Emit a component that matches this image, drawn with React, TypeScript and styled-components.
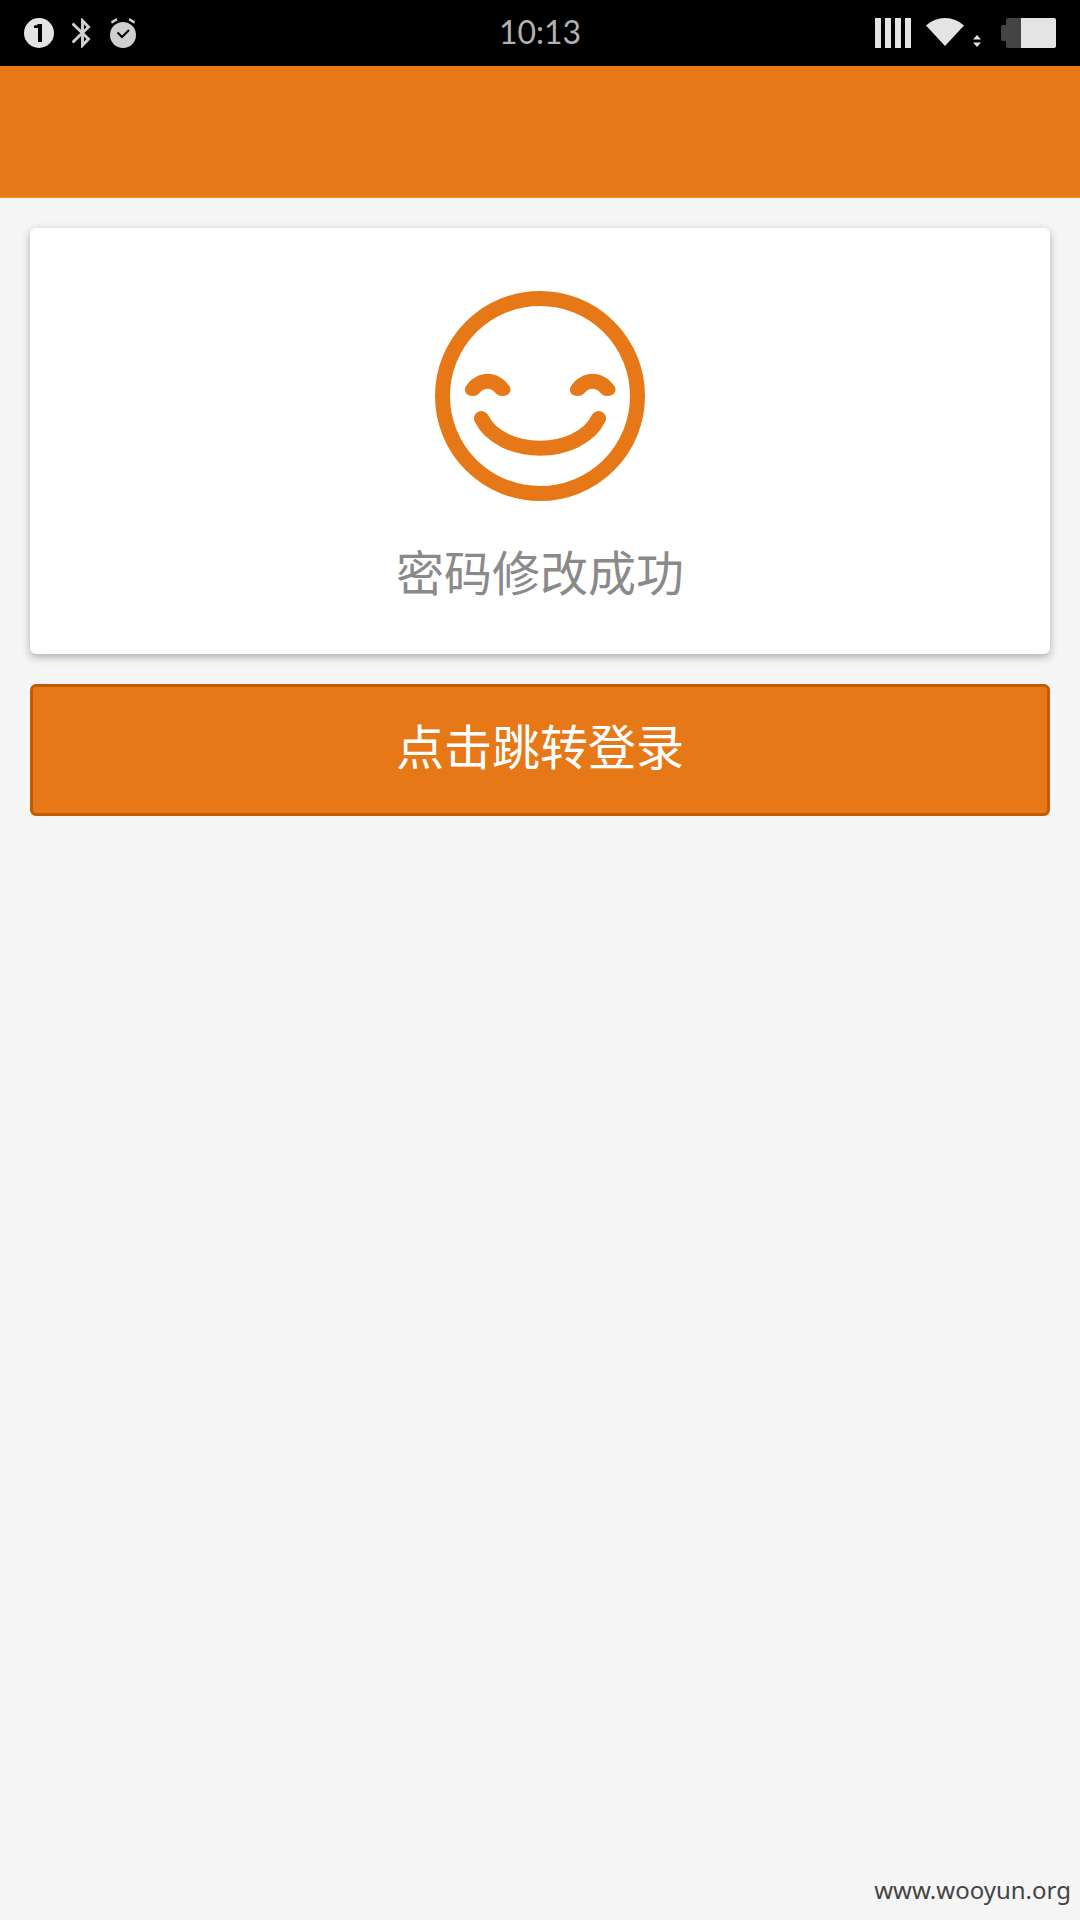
import React from "react";
import styled, { createGlobalStyle } from "styled-components";

const ORANGE = "#e67817";

const GlobalStyle = createGlobalStyle`
  *, *::before, *::after {
    box-sizing: border-box;
  }
  body {
    margin: 0;
    background: #f5f5f5;
    font-family: "Noto Sans CJK SC", "Noto Sans", sans-serif;
  }
`;

const Page = styled.div`
  display: flex;
  flex-direction: column;
  min-height: 100vh;
`;

const StatusBar = styled.div`
  display: grid;
  grid-template-columns: 1fr auto 1fr;
  align-items: center;
  height: 66px;
  padding: 0 24px;
  background: #000;
`;

const StatusGroup = styled.div<{ $end?: boolean; $gap: number }>`
  display: flex;
  align-items: center;
  justify-content: ${(p) => (p.$end ? "flex-end" : "flex-start")};
  gap: ${(p) => p.$gap}px;
`;

const Icon = styled.svg`
  display: block;
  flex: none;
`;

const Clock = styled.time`
  padding-bottom: 2px;
  color: #b0b0b0;
  font-family: Lato, sans-serif;
  font-size: 32px;
  font-weight: 400;
  line-height: 40px;
`;

const Header = styled.header`
  height: 132px;
  background: ${ORANGE};
  border-bottom: 1px solid #eb9a0c;
`;

const Content = styled.main`
  display: flex;
  flex-direction: column;
  gap: 30px;
  padding: 30px;
`;

const Card = styled.section`
  display: flex;
  flex-direction: column;
  align-items: center;
  gap: 33px;
  padding: 63px 30px 48px;
  border-radius: 6px;
  background: #fff;
  box-shadow: 0 3px 9px rgba(0, 0, 0, 0.3);
`;

const Message = styled.p`
  margin: 0;
  color: #8a8a8a;
  font-size: 48px;
  font-weight: 400;
  line-height: 72px;
`;

const LoginButton = styled.button`
  width: 100%;
  height: 132px;
  padding: 0 30px 12px;
  border: 3px solid #c25b02;
  border-radius: 6px;
  background: ${ORANGE};
  color: #fff;
  font-family: inherit;
  font-size: 48px;
  font-weight: 400;
  line-height: 72px;
  cursor: pointer;
`;

const Footer = styled.footer`
  margin-top: auto;
  padding: 0 9px 12px;
  color: #444;
  font-family: "Noto Sans", sans-serif;
  font-size: 24px;
  line-height: 36px;
  text-align: right;
`;

function NotificationIcon() {
  return (
    <Icon width="30" height="30" viewBox="0 0 30 30" aria-hidden="true">
      <circle cx="15" cy="15" r="15" fill="#e4e4e4" />
      <path d="M14 6h4v18h-4V10h-4V7.600Q13 7.600 14 6z" fill="#000" />
    </Icon>
  );
}

function BluetoothIcon() {
  return (
    <Icon width="20" height="30" viewBox="1 0 20 30" aria-hidden="true">
      <path
        d="M1.500 5.500L17.500 21L11.500 27.300V2.700L17.500 9L1.500 24.500"
        fill="none"
        stroke="#cfcfcf"
        strokeWidth="2.900"
      />
    </Icon>
  );
}

function AlarmIcon() {
  return (
    <Icon width="26" height="30" viewBox="0 0 26 30" aria-hidden="true">
      <circle cx="13" cy="17" r="13" fill="#cfcfcf" />
      <path d="M1 3.300L6.500 0L7.300 2.500L1.800 5.800zM25 3.300L19.500 0L18.700 2.500L24.200 5.800z" fill="#cfcfcf" />
      <path d="M7.500 14.500L12 19L19 12" fill="none" stroke="#000" strokeWidth="2" />
    </Icon>
  );
}

function SignalIcon() {
  return (
    <Icon width="36" height="30" viewBox="0 0 36 30" aria-hidden="true">
      <path d="M0 0h6v30H0zM10 0h6v30h-6zM20 0h6v30h-6zM30 0h6v30h-6z" fill="#e4e4e4" />
    </Icon>
  );
}

function WifiIcon() {
  return (
    <Icon width="55" height="30" viewBox="0 0 55 30" aria-hidden="true">
      <path d="M0 7.500Q8 0 19 0T38 7.500L19 28z" fill="#e4e4e4" />
      <path d="M47 21.500L51 17L55 21.500zM47 24.500H55L51 29z" fill="#e4e4e4" />
    </Icon>
  );
}

function BatteryIcon() {
  return (
    <Icon width="60" height="30" viewBox="-5 0 60 30" aria-hidden="true">
      <path d="M7 0H20V30H7Q5 30 5 28V23H2Q0 23 0 21V9Q0 7 2 7H5V2Q5 0 7 0z" fill="#444" />
      <path d="M20 0H53Q55 0 55 2V28Q55 30 53 30H20z" fill="#e4e4e4" />
    </Icon>
  );
}

const EYE =
  "M30.500 96C35 88 44 82.700 52.700 82.700S70 88 75 96C77 101 73 105 67.700 105C64 105 62 104 60 101.500C56 96.500 49 96.500 45 101.500C43 104 41 105 37.500 105C32 105 28.500 101 30.500 96Z";

function SmileIcon() {
  return (
    <Icon width="210" height="210" viewBox="0 0 210 210" fill="none" aria-hidden="true">
      <circle cx="105" cy="105" r="97.500" stroke={ORANGE} strokeWidth="15" />
      <path d={EYE} fill={ORANGE} />
      <path d={EYE} fill={ORANGE} transform="translate(105 0)" />
      <path
        d="M46.500 127.500C66 167 144 167 163.500 127.500"
        stroke={ORANGE}
        strokeWidth="15"
        strokeLinecap="round"
      />
    </Icon>
  );
}

export default function App() {
  return (
    <Page>
      <GlobalStyle />
      <StatusBar>
        <StatusGroup $gap={18}>
          <NotificationIcon />
          <BluetoothIcon />
          <AlarmIcon />
        </StatusGroup>
        <Clock>10:13</Clock>
        <StatusGroup $end $gap={15}>
          <SignalIcon />
          <WifiIcon />
          <BatteryIcon />
        </StatusGroup>
      </StatusBar>
      <Header />
      <Content>
        <Card>
          <SmileIcon />
          <Message>密码修改成功</Message>
        </Card>
        <LoginButton type="button">点击跳转登录</LoginButton>
      </Content>
      <Footer>www.wooyun.org</Footer>
    </Page>
  );
}
